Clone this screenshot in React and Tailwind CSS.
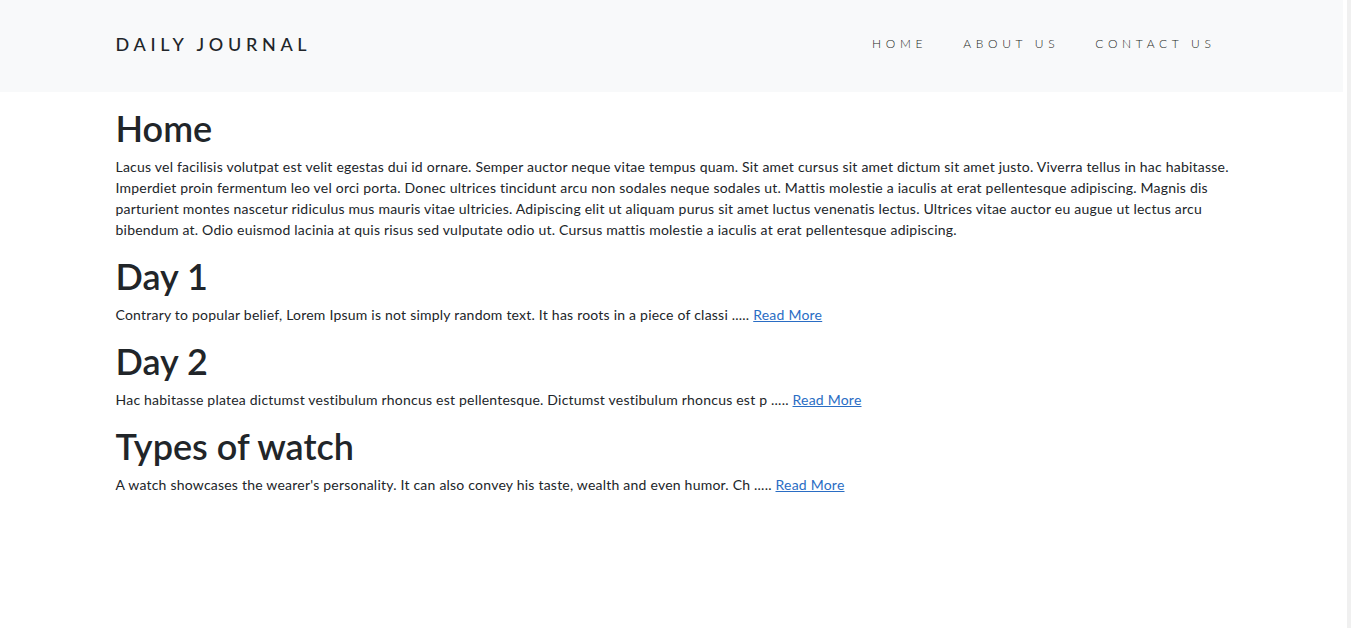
const posts = [
  {
    title: "Day 1",
    body: "Contrary to popular belief, Lorem Ipsum is not simply random text. It has roots in a piece of classi",
  },
  {
    title: "Day 2",
    body: "Hac habitasse platea dictumst vestibulum rhoncus est pellentesque. Dictumst vestibulum rhoncus est p",
  },
  {
    title: "Types of watch",
    body: "A watch showcases the wearer's personality. It can also convey his taste, wealth and even humor. Ch",
  },
];

const homeText =
  "Lacus vel facilisis volutpat est velit egestas dui id ornare. Semper auctor neque vitae tempus quam. Sit amet cursus sit amet dictum sit amet justo. Viverra tellus in hac habitasse. Imperdiet proin fermentum leo vel orci porta. Donec ultrices tincidunt arcu non sodales neque sodales ut. Mattis molestie a iaculis at erat pellentesque adipiscing. Magnis dis parturient montes nascetur ridiculus mus mauris vitae ultricies. Adipiscing elit ut aliquam purus sit amet luctus venenatis lectus. Ultrices vitae auctor eu augue ut lectus arcu bibendum at. Odio euismod lacinia at quis risus sed vulputate odio ut. Cursus mattis molestie a iaculis at erat pellentesque adipiscing.";

const App = () => {
  return (
    <div className="flex min-h-screen bg-white text-[#212529] font-['Lato','Liberation_Sans',sans-serif]">
      <div className="flex-1">
        {/* navbar */}
        <nav className="h-[92px] bg-[#f8f9fa]">
          <div className="mx-auto flex w-[1140px] items-start justify-between px-[15px] pt-[33px]">
            <a href="#" className="-ml-px text-[18px] font-medium leading-[22px] tracking-[0.26em] text-[#212529]">
              DAILY JOURNAL
            </a>
            <ul className="mr-[11px] flex gap-[36px] pt-[3px] text-[12px] font-light leading-[16px] tracking-[0.39em] text-[#1c1f22]">
              <li><a href="#">HOME</a></li>
              <li><a href="#">ABOUT US</a></li>
              <li><a href="#">CONTACT US</a></li>
            </ul>
          </div>
        </nav>

        {/* content */}
        <div className="mx-auto w-[1140px] px-[15px] pt-[15px]">
          <div className="-ml-px -mr-[8px]">
            <h1 className="mb-[6px] text-[36px] font-semibold leading-[43px]">Home</h1>
            <p className="mb-[15px] text-[14px] leading-[21px] tracking-[0.22px]">{homeText}</p>

            {posts.map((post) => (
              <div key={post.title}>
                <h1 className="mb-[6px] text-[36px] font-semibold leading-[43px]">{post.title}</h1>
                <p className="mb-[15px] text-[14px] leading-[21px] tracking-[0.22px]">
                  {post.body} .....{" "}
                  <a href="#" className="text-[#2a6dc4] underline">
                    Read More
                  </a>
                </p>
              </div>
            ))}
          </div>
        </div>
      </div>

      {/* scrollbar strip */}
      <div className="w-[8px] pl-[4px]">
        <div className="h-full w-[4px] bg-[#f0f0f0]" />
      </div>
    </div>
  );
};

export default App;
